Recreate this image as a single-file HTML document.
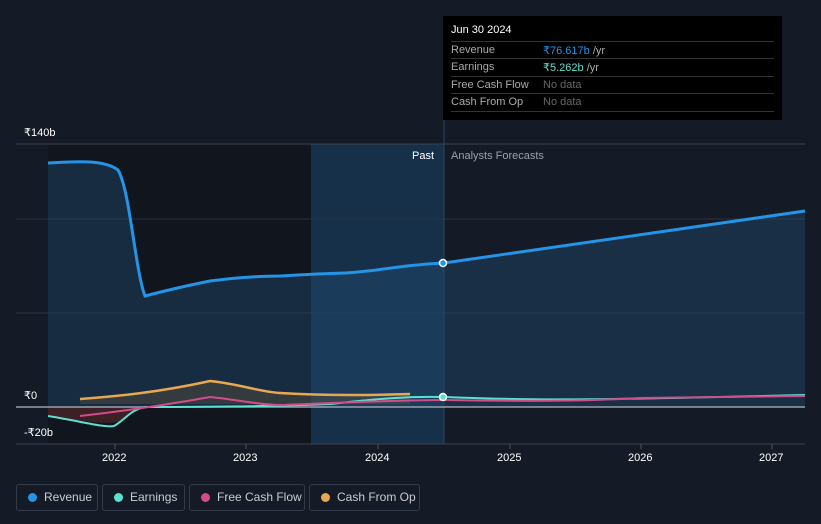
<!DOCTYPE html>
<html><head><style>
body{margin:0;width:821px;height:524px;background:#151b26;font-family:"Liberation Sans",sans-serif;overflow:hidden;position:relative}
.t{position:absolute;font-size:11px;color:#fff}
.tip{position:absolute;left:443px;top:16px;width:339px;height:104px;background:#000}
.tip .r{position:absolute;left:8px;right:8px;border-top:1px solid #333;height:17px;font-size:11px;color:#aaa}
.lg{position:absolute;top:484px;height:27px;border:1px solid #333c48;border-radius:3px;font-size:12px;color:#c8ccd2;line-height:25px;box-sizing:border-box;padding-left:27px;white-space:nowrap}
.lg i{position:absolute;left:11px;top:8px;width:9px;height:9px;border-radius:50%}
</style></head><body>
<svg width="821" height="524" style="position:absolute;left:0;top:0">
<rect x="48" y="144" width="263" height="300" fill="#11151d"/>
<rect x="311" y="144" width="133" height="300" fill="#173049"/>
<line x1="16" y1="144" x2="805" y2="144" stroke="#3a4350"/>
<line x1="16" y1="219" x2="805" y2="219" stroke="#2a323e"/>
<line x1="16" y1="313" x2="805" y2="313" stroke="#2a323e"/>
<line x1="16" y1="444" x2="805" y2="444" stroke="#3a4350"/>
<line x1="444" y1="16" x2="444" y2="444" stroke="#2a4660"/>
<path d="M48,163 C80,161 105,160 118,170 C130,190 135,270 145,296 C160,292 175,288 210,281 C240,277 260,276 280,276 C300,275 310,274 345,273 C380,271 400,265 444,263 L805,211 L805,407 L48,407Z" fill="#1e4a6e" fill-opacity="0.45"/>
<path d="M80,399 C120,396 160,392 210,381 C240,384 260,392 280,393 C330,396 380,395 410,394 L410,404 L80,404Z" fill="#6a5a3a" fill-opacity="0.35"/>
<path d="M48,407 L48,416 C80,421 113,426 122,420 L140,407Z" fill="#6a2a30" fill-opacity="0.5"/>
<line x1="16" y1="407" x2="805" y2="407" stroke="#9aa0a8" stroke-width="1.5"/>
<path d="M48,163 C80,161 105,160 118,170 C130,190 135,270 145,296 C160,292 175,288 210,281 C240,277 260,276 280,276 C300,275 310,274 345,273 C380,271 400,265 444,263 L805,211" fill="none" stroke="#2394e6" stroke-width="3"/>
<path d="M48,416 C80,421 105,428 114,426 C125,420 130,410 145,407 C200,407 280,406 330,404 C370,400 400,396 444,397 C520,400 560,401 805,395" fill="none" stroke="#5ce0d0" stroke-width="2"/>
<path d="M80,416 C115,412 160,406 210,397 C240,400 260,405 280,405 C330,403 400,400 444,400 C560,402 600,400 640,398 L805,396" fill="none" stroke="#d14c8a" stroke-width="2"/>
<path d="M80,399 C120,396 160,392 210,381 C240,384 260,392 280,393 C330,396 380,395 410,394" fill="none" stroke="#e8a852" stroke-width="2.5"/>
<circle cx="443" cy="263" r="3.5" fill="#2394e6" stroke="#fff" stroke-width="1.5"/>
<circle cx="443" cy="397" r="3.5" fill="#5ce0d0" stroke="#fff" stroke-width="1.5"/>
<g stroke="#555" ><line x1="115" y1="444" x2="115" y2="449"/><line x1="246" y1="444" x2="246" y2="449"/><line x1="378" y1="444" x2="378" y2="449"/><line x1="510" y1="444" x2="510" y2="449"/><line x1="641" y1="444" x2="641" y2="449"/><line x1="772" y1="444" x2="772" y2="449"/></g>
</svg>
<div class="t" style="left:24px;top:126px">₹140b</div>
<div class="t" style="left:24px;top:389px">₹0</div>
<div class="t" style="left:24px;top:426px">-₹20b</div>
<div class="t" style="left:412px;top:150px">Past</div>
<div class="t" style="left:451px;top:150px;color:#9aa0a8">Analysts Forecasts</div>
<div class="t" style="left:102px;top:452px">2022</div>
<div class="t" style="left:233px;top:452px">2023</div>
<div class="t" style="left:365px;top:452px">2024</div>
<div class="t" style="left:497px;top:452px">2025</div>
<div class="t" style="left:628px;top:452px">2026</div>
<div class="t" style="left:759px;top:452px">2027</div>
<div class="tip">
<div style="position:absolute;left:8px;top:8px;font-size:11px;color:#fff">Jun 30 2024</div>
<div class="r" style="top:25px"><span style="position:absolute;top:2px">Revenue</span><span style="position:absolute;left:92px;top:2px"><span style="color:#2394e6">₹76.617b</span> /yr</span></div>
<div class="r" style="top:42px"><span style="position:absolute;top:2px">Earnings</span><span style="position:absolute;left:92px;top:2px"><span style="color:#5ce0d0">₹5.262b</span> /yr</span></div>
<div class="r" style="top:60px"><span style="position:absolute;top:2px">Free Cash Flow</span><span style="position:absolute;left:92px;top:2px;color:#666">No data</span></div>
<div class="r" style="top:77px;border-bottom:1px solid #333"><span style="position:absolute;top:2px">Cash From Op</span><span style="position:absolute;left:92px;top:2px;color:#666">No data</span></div>
</div>
<div class="lg" style="left:16px;width:82px"><i style="background:#2394e6"></i>Revenue</div>
<div class="lg" style="left:102px;width:83px"><i style="background:#5ce0d0"></i>Earnings</div>
<div class="lg" style="left:189px;width:116px"><i style="background:#d14c8a"></i>Free Cash Flow</div>
<div class="lg" style="left:309px;width:111px"><i style="background:#e8a852"></i>Cash From Op</div>
</body></html>
